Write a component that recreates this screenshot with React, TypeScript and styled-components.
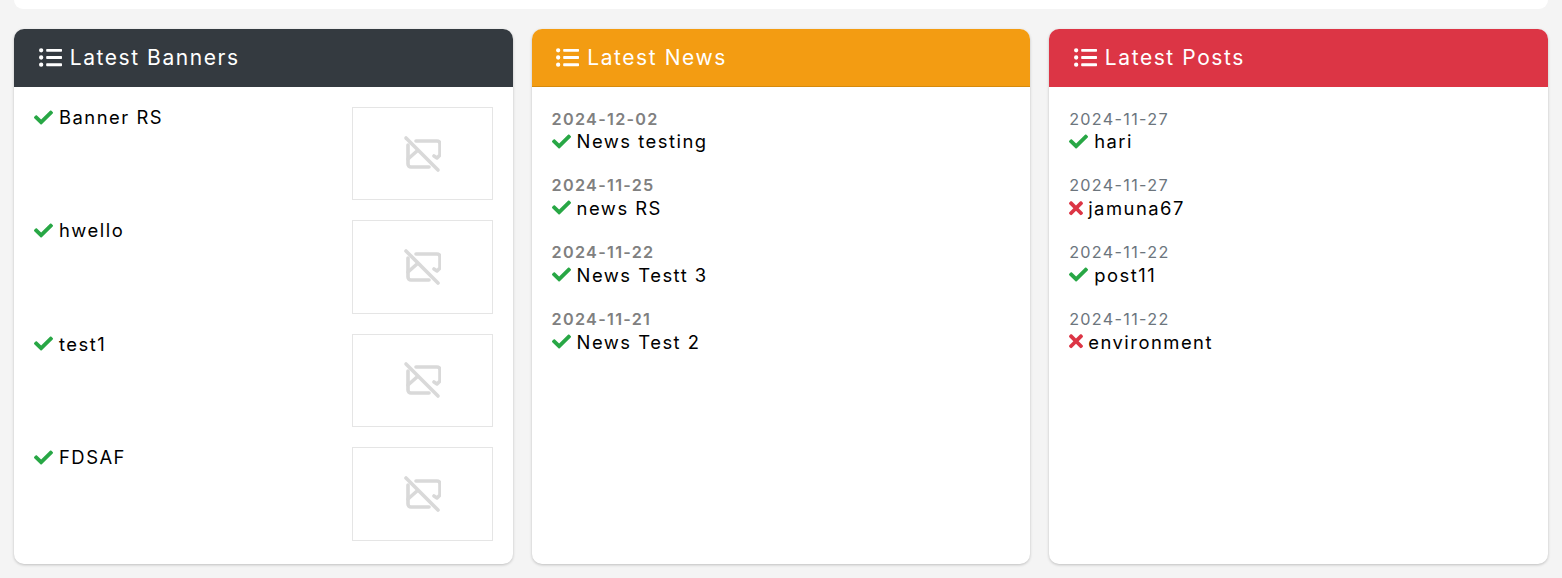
import React from 'react';
import styled, { createGlobalStyle } from 'styled-components';
import { FaCheck, FaListUl, FaTimes } from 'react-icons/fa';

const GlobalStyle = createGlobalStyle`
    html, body {
        margin: 0;
        padding: 0;
        height: 100%;
        overflow: hidden;
        background: #f4f4f4;
        font-family: Inter, "Liberation Sans", sans-serif;
    }
`;

const Page = styled.div`
    padding: 0 14px;
`;

const TopCard = styled.div`
    height: 9px;
    background: #fff;
    border-radius: 0 0 10px 10px;
    margin-bottom: 20px;
`;

const Columns = styled.div`
    display: grid;
    grid-template-columns: repeat(3, 1fr);
    column-gap: 18.75px;
`;

const Card = styled.section`
    height: 535px;
    background: #fff;
    border-radius: 10px;
    box-shadow: 0 1px 3px rgba(0, 0, 0, 0.22);
    overflow: hidden;
`;

const CardHeader = styled.header<{ $bg: string; $border: string }>`
    box-sizing: border-box;
    height: 58px;
    display: flex;
    align-items: center;
    gap: 8px;
    padding: 0 24.7px 1px;
    background: ${(props) => props.$bg};
    border-bottom: 1px solid ${(props) => props.$border};
    color: #fff;
    font-size: 21px;
    letter-spacing: 1.57px;
`;

const CardBody = styled.div`
    padding: 20.5px 20px 0;
`;

const BannerBody = styled.div`
    padding: 20px 20px 0;
`;

const BannerRow = styled.div`
    display: flex;
    justify-content: space-between;
    align-items: flex-start;
    height: 93.4px;
    margin-bottom: 20px;
`;

const Title = styled.div`
    display: flex;
    align-items: center;
    gap: 6px;
    height: 21px;
    font-size: 18.4px;
    letter-spacing: 1.5px;
    color: #000;
`;

const BannerTitle = styled(Title)`
    height: 20px;
`;

const Thumb = styled.div`
    box-sizing: border-box;
    width: 141px;
    height: 93.4px;
    display: flex;
    align-items: center;
    justify-content: center;
    border: 1px solid #e5e5e5;
`;

const Entry = styled.div`
    height: 66.9px;
`;

const DateLine = styled.div<{ $bold?: boolean }>`
    height: 23px;
    line-height: 23px;
    font-size: 16.2px;
    letter-spacing: 1.3px;
    color: ${(props) => (props.$bold ? '#808080' : '#6c757d')};
    font-weight: ${(props) => (props.$bold ? 600 : 400)};
`;

const CheckMark = styled(FaCheck)`
    width: 19px;
    height: 19px;
    color: #28a745;
    flex: none;
`;

const CrossMark = styled(FaTimes)`
    width: 14px;
    height: 20.4px;
    margin-right: -1px;
    color: #dc3545;
    flex: none;
`;

const ImageOff = () => (
    <svg width="38" height="38" viewBox="-1 -1 38 38" fill="none" stroke="#d9d9d9" strokeWidth="3.6" strokeLinecap="round" strokeLinejoin="round">
        <path d="M2 2 L34 34" />
        <path d="M12 5 H33 a3 3 0 0 1 3 3 V19 L33 22 L30 20" />
        <path d="M4 9 V28 a3 3 0 0 0 3 3 H25" />
        <path d="M4 23 L13 15" />
    </svg>
);

const banners = ['Banner RS', 'hwello', 'test1', 'FDSAF'];

const news = [
    { date: '2024-12-02', title: 'News testing', ok: true },
    { date: '2024-11-25', title: 'news RS', ok: true },
    { date: '2024-11-22', title: 'News Testt 3', ok: true },
    { date: '2024-11-21', title: 'News Test 2', ok: true },
];

const posts = [
    { date: '2024-11-27', title: 'hari', ok: true },
    { date: '2024-11-27', title: 'jamuna67', ok: false },
    { date: '2024-11-22', title: 'post11', ok: true },
    { date: '2024-11-22', title: 'environment', ok: false },
];

const Heading = ({ text, bg, border }: { text: string; bg: string; border: string }) => (
    <CardHeader $bg={bg} $border={border}>
        <FaListUl size={23} />
        {text}
    </CardHeader>
);

const EntryList = ({ items, bold }: { items: typeof news; bold?: boolean }) => (
    <CardBody>
        {items.map((item) => (
            <Entry key={item.title}>
                <DateLine $bold={bold}>{item.date}</DateLine>
                <Title>
                    {item.ok ? <CheckMark /> : <CrossMark />}
                    {item.title}
                </Title>
            </Entry>
        ))}
    </CardBody>
);

const App = () => (
    <Page>
        <GlobalStyle />
        <TopCard />
        <Columns>
            <Card>
                <Heading text="Latest Banners" bg="#343a40" border="#343a40" />
                <BannerBody>
                    {banners.map((name) => (
                        <BannerRow key={name}>
                            <BannerTitle>
                                <CheckMark />
                                {name}
                            </BannerTitle>
                            <Thumb>
                                <ImageOff />
                            </Thumb>
                        </BannerRow>
                    ))}
                </BannerBody>
            </Card>
            <Card>
                <Heading text="Latest News" bg="#f39c12" border="#d68a0c" />
                <EntryList items={news} bold />
            </Card>
            <Card>
                <Heading text="Latest Posts" bg="#dc3545" border="#dc3545" />
                <EntryList items={posts} />
            </Card>
        </Columns>
    </Page>
);

export default App;
